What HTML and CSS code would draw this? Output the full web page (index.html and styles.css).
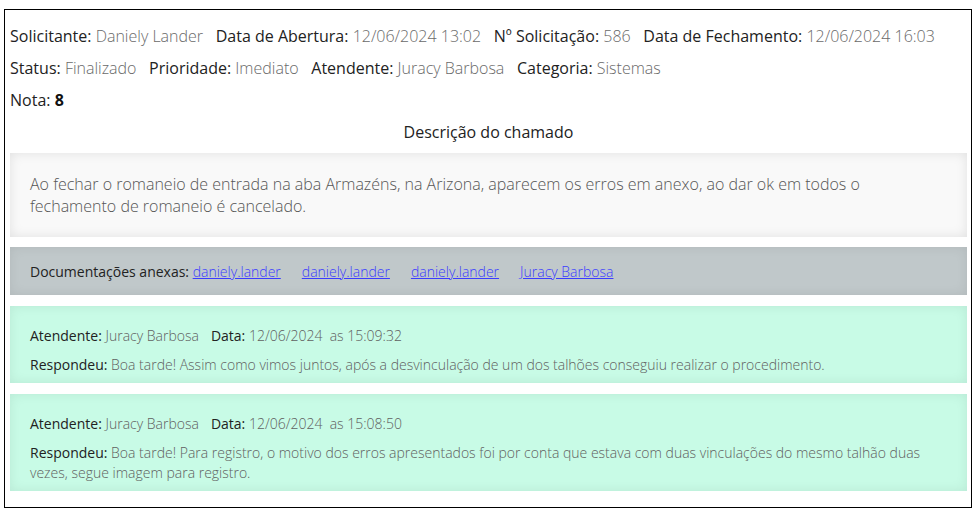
FILE: index.html
```html
<!DOCTYPE html>
<html lang="pt-BR">
<head>
<meta charset="utf-8">
<title>Chamado 586</title>
<link rel="stylesheet" href="styles.css">
</head>
<body>
<div class="card">
  <div class="row">
    <span class="item"><span class="lbl">Solicitante:</span> <span class="val">Daniely Lander</span></span>
    <span class="item"><span class="lbl">Data de Abertura:</span> <span class="val">12/06/2024 13:02</span></span>
    <span class="item"><span class="lbl">Nº Solicitação:</span> <span class="val">586</span></span>
    <span class="item"><span class="lbl">Data de Fechamento:</span> <span class="val">12/06/2024 16:03</span></span>
  </div>
  <div class="row">
    <span class="item"><span class="lbl">Status:</span> <span class="val">Finalizado</span></span>
    <span class="item"><span class="lbl">Prioridade:</span> <span class="val">Imediato</span></span>
    <span class="item"><span class="lbl">Atendente:</span> <span class="val">Juracy Barbosa</span></span>
    <span class="item"><span class="lbl">Categoria:</span> <span class="val">Sistemas</span></span>
  </div>
  <div class="row">
    <span class="item"><span class="lbl">Nota:</span> <b class="nota">8</b></span>
  </div>
  <div class="row title">Descrição do chamado</div>
  <div class="desc">Ao fechar o romaneio de entrada na aba Armazéns, na Arizona, aparecem os erros em anexo, ao dar ok em todos o fechamento de romaneio é cancelado.</div>
  <div class="attach"><span class="lbl">Documentações anexas:</span> <a href="#">daniely.lander</a><a href="#">daniely.lander</a><a href="#">daniely.lander</a><a href="#">Juracy Barbosa</a></div>
  <div class="reply">
    <div class="meta"><span class="item"><span class="lbl">Atendente:</span> <span class="val">Juracy Barbosa</span></span><span class="item"><span class="lbl">Data:</span> <span class="val">12/06/2024 &nbsp;as 15:09:32</span></span></div>
    <div class="msg"><span class="lbl">Respondeu:</span> <span class="val">Boa tarde! Assim como vimos juntos, após a desvinculação de um dos talhões conseguiu realizar o procedimento.</span></div>
  </div>
  <div class="reply">
    <div class="meta"><span class="item"><span class="lbl">Atendente:</span> <span class="val">Juracy Barbosa</span></span><span class="item"><span class="lbl">Data:</span> <span class="val">12/06/2024 &nbsp;as 15:08:50</span></span></div>
    <div class="msg"><span class="lbl">Respondeu:</span> <span class="val">Boa tarde! Para registro, o motivo dos erros apresentados foi por conta que estava com duas vinculações do mesmo talhão duas vezes, segue imagem para registro.</span></div>
  </div>
</div>
</body>
</html>
```
FILE: styles.css
```css
html, body {
  margin: 0;
  padding: 0;
  background: #fff;
}
body {
  padding: 9px 8px 0 4px;
  font-family: "Open Sans", "Liberation Sans", sans-serif;
  color: #222;
}
.card {
  border: 1px solid #000;
  padding: 10px 4px 16px 5px;
  box-sizing: content-box;
  width: 957px;
}
.row {
  font-size: 16px;
  line-height: 32px;
  white-space: nowrap;
}
.row .item {
  margin-right: 8.5px;
}
.lbl {
  font-weight: 400;
  color: #222;
}
.val {
  font-weight: 300;
  color: #6a6a6a;
}
.nota {
  font-weight: 700;
  color: #111;
}
.title {
  text-align: center;
  color: #222;
}
.desc {
  margin-top: 5px;
  background: #f9f9f9;
  box-shadow: inset 0 0 12px rgba(0, 0, 0, 0.1);
  padding: 20px;
  font-size: 16px;
  line-height: 22px;
  font-weight: 300;
  color: #555;
}
.attach {
  margin-top: 10px;
  background: #c0c8ca;
  box-shadow: inset 0 0 12px rgba(0, 0, 0, 0.08);
  padding: 16px 20px 14px;
  font-size: 14px;
  line-height: 18px;
}
.attach a {
  color: #3b3bff;
  text-decoration: underline;
  font-weight: 300;
  margin-left: 4px;
  margin-right: 17px;
}
.attach .lbl + a {
  margin-left: 0;
}
.reply {
  margin-top: 11px;
  background: #c8fbe6;
  box-shadow: inset 0 0 12px rgba(0, 0, 0, 0.08);
  padding: 20px 20px 8px;
  font-size: 14px;
  line-height: 20px;
}
.reply .val {
  color: #606060;
}
.meta .item {
  margin-right: 12px;
}
.msg {
  margin-top: 9px;
}
```
